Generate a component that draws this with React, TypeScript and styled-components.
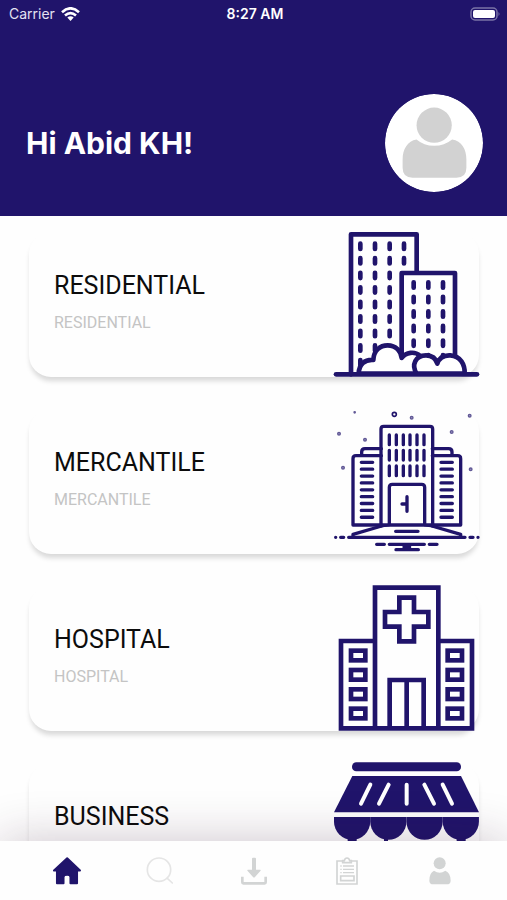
import React from 'react';
import styled, { createGlobalStyle } from 'styled-components';

const navy = '#20146b';
const muted = '#d2d4d4';

const GlobalStyle = createGlobalStyle`
  * { box-sizing: border-box; }
  body { margin: 0; background: #fefefe; font-family: Inter, sans-serif; }
  button { border: 0; margin: 0; padding: 0; background: none; font: inherit; color: inherit; cursor: pointer; }
`;

const Screen = styled.div`
  display: flex;
  flex-direction: column;
  height: 100vh;
  overflow: hidden;
`;

const Header = styled.header`
  flex: none;
  background: ${navy};
  color: #fff;
`;

const StatusBar = styled.div`
  display: grid;
  grid-template-columns: 1fr auto 1fr;
  align-items: center;
  height: 28px;
  padding: 0 6px 0 9px;
  font-size: 14px;
  line-height: 20px;
`;

const Carrier = styled.span`
  display: flex;
  align-items: center;
  gap: 6px;
  color: #e4e2f2;
`;

const Clock = styled.time`
  font-weight: 600;
`;

const Battery = styled.svg`
  justify-self: end;
  width: 31px;
  height: 14px;
`;

const Greeting = styled.div`
  display: flex;
  align-items: center;
  justify-content: space-between;
  padding: 66px 24px 24px 26px;
`;

const Hello = styled.h1`
  margin: 0;
  font-size: 30px;
  line-height: 36px;
  font-weight: 700;
`;

const Avatar = styled.button`
  width: 98px;
  height: 98px;
  border-radius: 50%;
  overflow: hidden;

  svg { display: block; width: 100%; height: 100%; }
`;

const List = styled.main`
  flex: 1;
  min-height: 0;
  display: flex;
  flex-direction: column;
  gap: 32px;
  padding: 16px 28px 32px 29px;
  overflow-y: auto;
  scrollbar-width: none;
`;

const Card = styled.button`
  flex: none;
  display: flex;
  align-items: flex-start;
  justify-content: space-between;
  height: 145px;
  padding-left: 25px;
  border-radius: 22px;
  background: #fefefe;
  box-shadow: 0 5px 5px -1px rgba(0, 0, 0, 0.15);
  text-align: left;
  font-family: Roboto, sans-serif;
`;

const CardText = styled.span`
  display: flex;
  flex-direction: column;
  gap: 11px;
  padding-top: 38px;
`;

const CardTitle = styled.span`
  font-size: 25px;
  line-height: 32px;
  color: #0c0c0c;
`;

const CardSubtitle = styled.span`
  font-size: 16px;
  line-height: 20px;
  color: #c4c4c4;
`;

const Picture = styled.svg`
  width: 145px;
  height: 145px;
  overflow: visible;
`;

const TabBar = styled.nav`
  flex: none;
  position: relative;
  display: flex;
  height: 59px;
  padding: 0 20px;
  background: #fefefe;
  box-shadow: 0 0 50px rgba(50, 15, 45, 0.24);
`;

const Tab = styled.button`
  flex: 1;
  display: flex;
  align-items: center;
  justify-content: center;

  svg { display: block; width: 28px; height: 28px; }
`;

const rows = (n: number) => Array.from({ length: n }, (_, i) => i);
const dash = (x: number, y: number) => `M${x} ${y - 8}v16`;

const Residential = () => {
  const tall = [[121, 8], [165, 8], [209, 7], [252, 2]]
    .flatMap(([x, n]) => rows(n).map(i => dash(x, 73 + i * 43.6)))
    .join('');
  const low = [281, 325, 369].flatMap(x => rows(6).map(i => dash(x, 189 + i * 43.6))).join('');
  return (
    <Picture viewBox="42 30 435 435" fill="none" stroke={navy} strokeWidth="14" strokeLinecap="round" strokeLinejoin="round" aria-hidden="true">
      <path d="M93 457V37H290V150M245 405V153H405V405" />
      <path d={tall + low + dash(121, 422)} />
      <path fill="#fff" d="M116 455C117 427 134 412 160 414C161 386 180 370 203 370C228 370 243 388 245 408C258 390 284 387 300 401L330 455Z" />
      <path fill="#fff" d="M290 455C273 428 287 400 318 400C338 400 348 410 352 425C357 408 371 399 391 400C422 402 435 428 434 455Z" />
      <path d="M48 457H471" />
    </Picture>
  );
};

const Wing = () => (
  <>
    <path d="M184 167H108q-9 0-9 9V375H184M125 163v-7q0-10 10-10h49" />
    <path strokeWidth="10" d={rows(9).map(i => `M124 ${187 + i * 20.6}h34`).join('')} />
    <path d="M99 403L185 378M99 403v5" />
    <path fill={navy} d="M160 385L184 377H208Z" strokeWidth="3" />
    <path d="M62 412h9M47 412h.1M170 433h23" strokeWidth="10" />
  </>
);

const Mercantile = () => {
  const windows = [208, 229, 250, 270, 291, 312]
    .flatMap(x => [105, 151, 198].map(y => `M${x} ${y}v29`))
    .join('');
  const dots = [[104, 37, 2], [275, 53, 4], [449, 47, 4], [57, 101, 4], [395, 96, 4], [135, 119, 4], [69, 203, 4], [452, 208, 4]];
  return (
    <Picture viewBox="42 27 435 435" fill="none" stroke={navy} strokeWidth="10" strokeLinecap="round" strokeLinejoin="round" aria-hidden="true">
      <Wing />
      <g transform="matrix(-1 0 0 1 521 0)"><Wing /></g>
      <path d="M183 375V87q0-8 8-8H330q8 0 8 8V375Z" />
      <path d={windows} />
      <path d="M208 373V262q0-9 9-9H305q9 0 9 9V373M261 290v44M246 312h15" />
      <path d="M227 394h67M86 412H435M208 433H313M228 449h67M252 441h17" />
      <circle cx="223" cy="43" r="6" strokeWidth="5" />
      {dots.map(([cx, cy, r]) => (
        <circle key={cx} cx={cx} cy={cy} r={r} strokeWidth="4" fill="#6f67a6" opacity="0.7" />
      ))}
    </Picture>
  );
};

const Hospital = () => (
  <Picture viewBox="42 33 435 435" fill="none" stroke={navy} strokeWidth="14" aria-hidden="true">
    <path d="M165 460V38H355V460M165 198H63V460H456V198H355" />
    <path d="M238 68H282V111H325V155H282V199H238V155H195V111H238Z" />
    <path d="M209 459V315H311V459M260 315V459" />
    {rows(4).map(i => (
      <React.Fragment key={i}>
        <rect x="93" y={227 + i * 58} width="43" height="29" />
        <rect x="383" y={227 + i * 58} width="43" height="29" />
      </React.Fragment>
    ))}
  </Picture>
);

const Business = () => (
  <Picture viewBox="42 39 435 435" fill={navy} aria-hidden="true">
    <rect x="96" y="37" width="327" height="27" rx="13" />
    <path d="M97 78H423L477 187H42Z" />
    <path stroke="#fff" strokeWidth="12" strokeLinecap="round" d="M151 104L123 161M206 104L177 161M260 104V161M313 104L342 161M368 104L396 161" />
    {rows(4).map(i => (
      <path key={i} d={`M${42 + i * 108.7} 201h108.7v14a54.3 54.3 0 0 1-108.7 0z`} />
    ))}
    <path d="M83 264h27v207h-27zM192 264h12v207h-12zM410 264h27v207h-27zM83 445h354v26H83z" />
  </Picture>
);

const categories = [
  { name: 'RESIDENTIAL', Art: Residential },
  { name: 'MERCANTILE', Art: Mercantile },
  { name: 'HOSPITAL', Art: Hospital },
  { name: 'BUSINESS', Art: Business },
];

const tabs = [
  {
    label: 'Home',
    icon: (
      <svg viewBox="158 231 85 83" fill={navy} stroke={navy} strokeWidth="6" strokeLinejoin="round">
        <path d="M201 234L161 271H170V310H190V291Q190 284 201 284Q211 284 211 291V310H231V271H240L201 234Z" />
      </svg>
    ),
  },
  {
    label: 'Search',
    icon: (
      <svg viewBox="440 231 84 84" fill="none" stroke="#e5e5e5" strokeWidth="5" strokeLinecap="round">
        <circle cx="479" cy="269" r="35" />
        <path d="M504 295L519 309" />
      </svg>
    ),
  },
  {
    label: 'Downloads',
    icon: (
      <svg viewBox="60 79 84 84" fill={muted}>
        <path d="M96 84q0-3 3-3h6q3 0 3 3v33h12q4 0 1 4l-16 18q-3 3-6 0l-16-18q-3-4 1-4h12z" />
        <path d="M67 138v17q0 3 3 3h64q3 0 3-3v-17" fill="none" stroke={muted} strokeWidth="8" />
      </svg>
    ),
  },
  {
    label: 'Reports',
    icon: (
      <svg viewBox="340 80 84 84" fill="none" stroke={muted} strokeWidth="5">
        <path d="M368 92H352V161H412V92H396" />
        <path d="M369 97V91H374Q376 83 382 83Q388 83 390 91H395V97Z" />
        <path d="M362 107h4M370 107h33M362 117h4M370 117h33M362 127h4M370 127h33" strokeWidth="4" />
        <path d="M363 137H403V151H363Z" />
      </svg>
    ),
  },
  {
    label: 'Profile',
    icon: (
      <svg viewBox="622 80 84 84" fill={muted}>
        <circle cx="663" cy="99" r="18" />
        <path d="M646 121Q663 133 680 121Q696 127 696 151Q696 162 684 162H644Q632 162 632 151Q632 127 646 121Z" />
      </svg>
    ),
  },
];

export default function App() {
  return (
    <Screen>
      <GlobalStyle />
      <Header>
        <StatusBar>
          <Carrier>
            Carrier
            <svg width="19" height="14" viewBox="0 0 19 14" fill="none" stroke="#fff" strokeWidth="2.6" aria-hidden="true">
              <path d="M1 5.2Q9.500-2.600 18 5.200M4 8.500Q9.500 3.600 15 8.500" />
              <path d="M6.300 10.600Q9.500 7.800 12.700 10.600L9.500 14Z" fill="#fff" stroke="none" />
            </svg>
          </Carrier>
          <Clock>8:27 AM</Clock>
          <Battery viewBox="0 0 31 14" aria-hidden="true">
            <rect x="1" y="1" width="26" height="12" rx="4" fill="none" stroke="#7973a6" strokeWidth="1.500" />
            <rect x="3" y="3" width="22" height="8" rx="2" fill="#fff" />
            <path d="M28.500 5q2 2 0 4z" fill="#7973a6" />
          </Battery>
        </StatusBar>
        <Greeting>
          <Hello>Hi Abid KH!</Hello>
          <Avatar aria-label="Profile picture">
            <svg viewBox="43 40 295 295">
              <circle cx="190.500" cy="187.500" r="147.500" fill="#fff" />
              <circle cx="191" cy="134" r="53" fill="#d2d2d2" />
              <path fill="#d2d2d2" d="M138 177Q160 196 191 196Q222 196 245 177C274 181 288 207 288 237V262Q288 292 258 292H126Q96 292 96 262V237C96 207 111 181 138 177Z" />
            </svg>
          </Avatar>
        </Greeting>
      </Header>
      <List>
        {categories.map(({ name, Art }) => (
          <Card key={name}>
            <CardText>
              <CardTitle>{name}</CardTitle>
              <CardSubtitle>{name}</CardSubtitle>
            </CardText>
            <Art />
          </Card>
        ))}
      </List>
      <TabBar>
        {tabs.map(({ label, icon }) => (
          <Tab key={label} aria-label={label}>{icon}</Tab>
        ))}
      </TabBar>
    </Screen>
  );
}
